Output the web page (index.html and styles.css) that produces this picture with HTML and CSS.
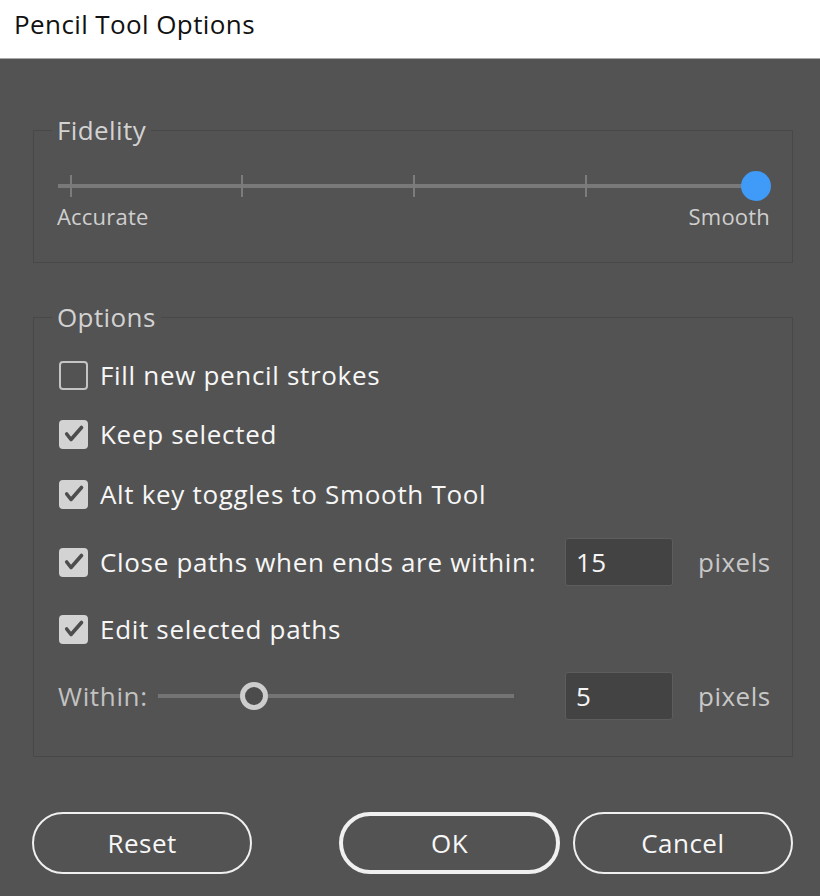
FILE: index.html
```html
<!DOCTYPE html>
<html>
<head>
<meta charset="utf-8">
<link rel="stylesheet" href="styles.css">
</head>
<body>
<div class="titlebar">Pencil Tool Options</div>
<div class="content">
  <fieldset class="group fidelity">
    <legend>Fidelity</legend>
    <div class="fslider">
      <div class="ftrack"></div>
      <span class="tick" style="left:12px"></span>
      <span class="tick" style="left:183px"></span>
      <span class="tick" style="left:355px"></span>
      <span class="tick" style="left:527px"></span>
      <span class="fthumb"></span>
    </div>
    <div class="flabels"><span>Accurate</span><span>Smooth</span></div>
  </fieldset>

  <fieldset class="group options">
    <legend>Options</legend>
    <div class="row r1">
      <span class="cb"></span><span class="label">Fill new pencil strokes</span>
    </div>
    <div class="row r2">
      <span class="cb on"><svg viewBox="0 0 25 25"><polyline points="5.7,12 10,17.5 20.5,5.5"/></svg></span><span class="label">Keep selected</span>
    </div>
    <div class="row r3">
      <span class="cb on"><svg viewBox="0 0 25 25"><polyline points="5.7,12 10,17.5 20.5,5.5"/></svg></span><span class="label">Alt key toggles to Smooth Tool</span>
    </div>
    <div class="row r4">
      <span class="cb on"><svg viewBox="0 0 25 25"><polyline points="5.7,12 10,17.5 20.5,5.5"/></svg></span><span class="label">Close paths when ends are within:</span>
      <span class="spacer"></span>
      <span class="field">15</span><span class="unit">pixels</span>
    </div>
    <div class="row r5">
      <span class="cb on"><svg viewBox="0 0 25 25"><polyline points="5.7,12 10,17.5 20.5,5.5"/></svg></span><span class="label">Edit selected paths</span>
    </div>
    <div class="row r6">
      <span class="within">Within:</span>
      <div class="wslider"><span class="wthumb"></span></div>
      <span class="spacer"></span>
      <span class="field">5</span><span class="unit">pixels</span>
    </div>
  </fieldset>

  <div class="buttons">
    <button class="btn reset">Reset</button>
    <button class="btn ok">OK</button>
    <button class="btn cancel">Cancel</button>
  </div>
</div>
</body>
</html>
```
FILE: styles.css
```css
* { box-sizing: border-box; }
html, body { margin: 0; padding: 0; }
body {
  width: 820px;
  height: 896px;
  background: #535353;
  font-family: "Open Sans", "Noto Sans", sans-serif;
  overflow: hidden;
}
.titlebar {
  height: 59px;
  background: #ffffff;
  border-bottom: 1px solid #a8a8a8;
  color: #111;
  font-size: 26px;
  letter-spacing: 0.4px;
  line-height: 48px;
  padding-left: 14px;
}
.content {
  padding: 57px 27px 0 33px;
}
.group {
  margin: 0;
  padding: 0;
  border: 1px solid #484848;
  min-width: 0;
}
.group legend {
  margin-left: -6px;
  padding: 0 5px;
  font-size: 26px;
  letter-spacing: 0.4px;
  line-height: 28px;
  color: #d2d2d2;
}
.fidelity {
  padding: 27px 0 31px 24px;
}
.fslider {
  position: relative;
  height: 30px;
  width: 714px;
}
.ftrack {
  position: absolute;
  left: 0;
  top: 13px;
  width: 690px;
  height: 4px;
  background: #797979;
}
.tick {
  position: absolute;
  top: 4px;
  width: 2px;
  height: 22px;
  background: #7c7c7c;
}
.fthumb {
  position: absolute;
  left: 683px;
  top: 0;
  width: 30px;
  height: 30px;
  border-radius: 50%;
  background: #3f9bf7;
}
.flabels {
  display: flex;
  justify-content: space-between;
  width: 713px;
  font-size: 22px;
  letter-spacing: 0.2px;
  line-height: 30px;
  color: #cfcfcf;
  margin-left: -1px;
}
.options {
  margin-top: 40px;
  padding: 14px 0 23px 24px;
}
.row {
  display: flex;
  align-items: center;
  height: 60px;
}
.r1 { height: 60px; }
.r2 { height: 58px; }
.r3 { height: 62px; }
.r4 { height: 74px; }
.r5 { height: 60px; }
.r6 { height: 74px; }
.cb {
  flex: none;
  width: 29px;
  height: 29px;
  border: 2px solid #c4c4c4;
  border-radius: 4px;
  margin-left: 1px;
  margin-right: 12px;
  display: flex;
}
.cb.on {
  background: #d3d3d3;
  border-color: #d3d3d3;
}
.cb svg {
  width: 25px;
  height: 25px;
  fill: none;
  stroke: #4d4d4d;
  stroke-width: 3.6;
  stroke-linecap: round;
  stroke-linejoin: round;
}
.label {
  font-size: 26px;
  letter-spacing: 0.68px;
  color: #f7f7f7;
  white-space: nowrap;
}
.spacer { flex: 1; }
.field {
  flex: none;
  width: 108px;
  height: 48px;
  background: #434343;
  border: 1px solid #5d5d5d;
  border-radius: 3px;
  color: #f5f5f5;
  font-size: 26px;
  letter-spacing: 0.5px;
  line-height: 46px;
  padding-left: 10px;
}
.unit {
  flex: none;
  width: 119px;
  padding-left: 25px;
  font-size: 26px;
  letter-spacing: 0.5px;
  color: #c8c8c8;
}
.within {
  font-size: 26px;
  letter-spacing: 0.65px;
  color: #c2c2c2;
  width: 100px;
}
.wslider {
  position: relative;
  width: 356px;
  height: 4px;
  background: #747474;
}
.wthumb {
  position: absolute;
  left: 82px;
  top: -12px;
  width: 28px;
  height: 28px;
  border-radius: 50%;
  border: 5px solid #cdcdcd;
  background: #4c4c4c;
}
.buttons {
  display: flex;
  margin-top: 55px;
  margin-left: -1px;
}
.btn {
  font-family: inherit;
  height: 62px;
  width: 221px;
  border-radius: 31px;
  background: transparent;
  border: 2px solid #f0f0f0;
  color: #f7f7f7;
  font-size: 26px;
  letter-spacing: 0.5px;
  padding: 0;
}
.btn.ok {
  margin-left: 87px;
  border-width: 4px;
  width: 221px;
}
.btn.cancel {
  margin-left: 13px;
}
```
